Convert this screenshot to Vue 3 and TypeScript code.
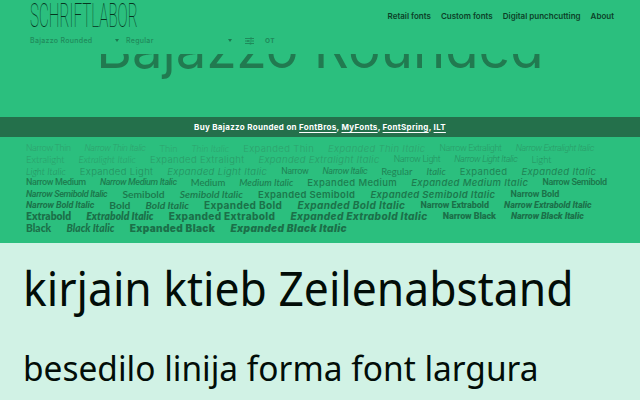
<script setup lang="ts">
type Item = { t: string; cls: string }
const weights: Record<string, string> = {
  Thin: 'w1', Extralight: 'w2', Light: 'w3', Regular: 'w4', Medium: 'w5', Semibold: 'w6', Bold: 'w7', Extrabold: 'w8', Black: 'w9',
}
function classify(t: string): Item {
  const parts = t.split(' ')
  const cls: string[] = []
  if (parts.includes('Narrow')) cls.push('narrow')
  else if (parts.includes('Expanded')) cls.push('expanded')
  else cls.push('normal')
  if (parts.includes('Italic')) cls.push('ital')
  const w = parts.find((p) => weights[p])
  cls.push(w ? weights[w] : 'w4')
  return { t, cls: cls.join(' ') }
}
const rows: Item[][] = [
  ['Narrow Thin', 'Narrow Thin Italic', 'Thin', 'Thin Italic', 'Expanded Thin', 'Expanded Thin Italic', 'Narrow Extralight', 'Narrow Extralight Italic'],
  ['Extralight', 'Extralight Italic', 'Expanded Extralight', 'Expanded Extralight Italic', 'Narrow Light', 'Narrow Light Italic', 'Light'],
  ['Light Italic', 'Expanded Light', 'Expanded Light Italic', 'Narrow', 'Narrow Italic', 'Regular', 'Italic', 'Expanded', 'Expanded Italic'],
  ['Narrow Medium', 'Narrow Medium Italic', 'Medium', 'Medium Italic', 'Expanded Medium', 'Expanded Medium Italic', 'Narrow Semibold'],
  ['Narrow Semibold Italic', 'Semibold', 'Semibold Italic', 'Expanded Semibold', 'Expanded Semibold Italic', 'Narrow Bold'],
  ['Narrow Bold Italic', 'Bold', 'Bold Italic', 'Expanded Bold', 'Expanded Bold Italic', 'Narrow Extrabold', 'Narrow Extrabold Italic'],
  ['Extrabold', 'Extrabold Italic', 'Expanded Extrabold', 'Expanded Extrabold Italic', 'Narrow Black', 'Narrow Black Italic'],
  ['Black', 'Black Italic', 'Expanded Black', 'Expanded Black Italic'],
].map((r) => r.map(classify))
const nav = ['Retail fonts', 'Custom fonts', 'Digital punchcutting', 'About']
</script>

<template>
  <div class="page">
    <section class="hero">
      <div class="top">
        <header class="head">
          <div class="logo">SCHRIFTLABOR</div>
          <nav class="nav">
            <a v-for="n in nav" :key="n">{{ n }}</a>
          </nav>
        </header>
        <div class="tools">
          <span class="sel sel1">Bajazzo Rounded<i class="caret"></i></span>
          <span class="sel sel2">Regular<i class="caret"></i></span>
          <svg class="sliders" width="9" height="8" viewBox="0 0 9 8" fill="none" stroke="currentColor" stroke-width="1">
            <path d="M0 1.500h9M0 4h9M0 6.500h9" />
            <path d="M6 .5v2M3 3v2M5.500 5.500v2" stroke-width="1.500" />
          </svg>
          <span class="ot">OT</span>
        </div>
      </div>
      <div class="title-clip">
        <h1 class="title">Bajazzo Rounded</h1>
      </div>
      <div class="buy">
        Buy Bajazzo Rounded on <a>FontBros</a>, <a>MyFonts</a>, <a>FontSpring</a>, <a>ILT</a>
      </div>
      <div class="styles">
        <div v-for="(r, i) in rows" :key="i" class="row" :class="{ heavy: i >= 4 }">
          <span v-for="it in r" :key="it.t" :class="it.cls">{{ it.t }}</span>
        </div>
      </div>
    </section>
    <section class="sample">
      <p class="big">kirjain ktieb Zeilenabstand</p>
      <p class="mid">besedilo linija forma font largura</p>
    </section>
  </div>
</template>

<style>
html, body { margin: 0; background: #d1f2e5; }
</style>

<style scoped>
.page {
  width: 640px;
  height: 400px;
  overflow: hidden;
  font-family: Inter, "Open Sans", sans-serif;
}
.hero {
  background: #2bbf7e;
  height: 243px;
  overflow: hidden;
}
.top { height: 54px; }
.head {
  display: flex;
  justify-content: space-between;
  padding: 0 26px 0 30px;
  height: 32px;
}
.logo {
  flex: none;
  font-family: Roboto, sans-serif;
  font-weight: 100;
  font-size: 34px;
  line-height: 30px;
  color: #06351f;
  transform: scaleX(0.447);
  transform-origin: left center;
  white-space: nowrap;
}
.nav {
  display: flex;
  gap: 10px;
  padding-top: 10px;
  font-size: 8px;
  font-weight: 600;
  line-height: 12px;
  color: #0b3f28;
}
.tools {
  display: flex;
  align-items: center;
  padding: 4px 0 0 30px;
  font-size: 7px;
  letter-spacing: 0.3px;
  color: #1f8a5b;
  font-weight: 500;
}
.sel { display: flex; align-items: center; justify-content: space-between; }
.sel1 { width: 89px; margin-right: 7px; }
.sel2 { width: 106px; margin-right: 13px; }
.caret {
  width: 0;
  height: 0;
  border-left: 2.500px solid transparent;
  border-right: 2.500px solid transparent;
  border-top: 3px solid #1a7a50;
}
.sliders { color: #1f8a5b; margin-right: 11px; }
.ot { font-weight: 700; font-size: 6.500px; letter-spacing: 0.5px; }
.title-clip { height: 63px; overflow: hidden; }
.title {
  margin: -36px 0 0;
  font-size: 54.500px;
  line-height: 60px;
  font-weight: 400;
  text-align: center;
  color: #217a50;
  white-space: nowrap;
}
.buy {
  height: 20px;
  line-height: 20px;
  background: #24704b;
  color: #fff;
  text-align: center;
  font-size: 8px;
  font-weight: 700;
  letter-spacing: 0.3px;
}
.buy a { text-decoration: underline; text-underline-offset: 2px; }
.styles { padding: 6px 0 0 26px; }
.row {
  display: flex;
  gap: 14px;
  height: 11.400px;
  line-height: 11.400px;
  white-space: nowrap;
}
.row.heavy { gap: 15.200px; }
.narrow { font-family: "Liberation Sans Narrow", Roboto, sans-serif; font-size: 9px; letter-spacing: -0.35px; }
.narrow.w7, .narrow.w8, .narrow.w9 { letter-spacing: -0.1px; }
.normal { font-family: Lato, sans-serif; font-size: 9.500px; }
.normal.w6, .normal.w7, .normal.w8, .normal.w9 { font-size: 10.300px; }
.expanded { font-family: Inter, sans-serif; font-size: 9.500px; letter-spacing: 0.35px; }
.expanded.w7, .expanded.w8, .expanded.w9 { font-size: 10.100px; }
.ital { font-style: italic; }
.w1 { font-weight: 300; color: #2ea26d; }
.w2 { font-weight: 300; color: #2a9c68; }
.w3 { font-weight: 300; color: #24905e; }
.w4 { font-weight: 400; color: #1f8455; }
.w5 { font-weight: 500; color: #1d7e50; }
.w6 { font-weight: 600; color: #1c784c; }
.w7 { font-weight: 700; color: #1b7249; }
.w8 { font-weight: 800; color: #1b7049; }
.w9 { font-weight: 900; color: #1b7049; }
.sample {
  padding: 13px 0 0 23px;
  color: #020d08;
  font-family: "Noto Sans", sans-serif;
}
.sample p { margin: 0; white-space: nowrap; transform-origin: left center; }
.big { font-size: 46.500px; line-height: 65px; transform: scaleX(0.955); }
.mid { font-size: 34.500px; line-height: 50px; transform: scaleX(0.97); }
.sample .mid { margin-top: 22px; }
</style>
